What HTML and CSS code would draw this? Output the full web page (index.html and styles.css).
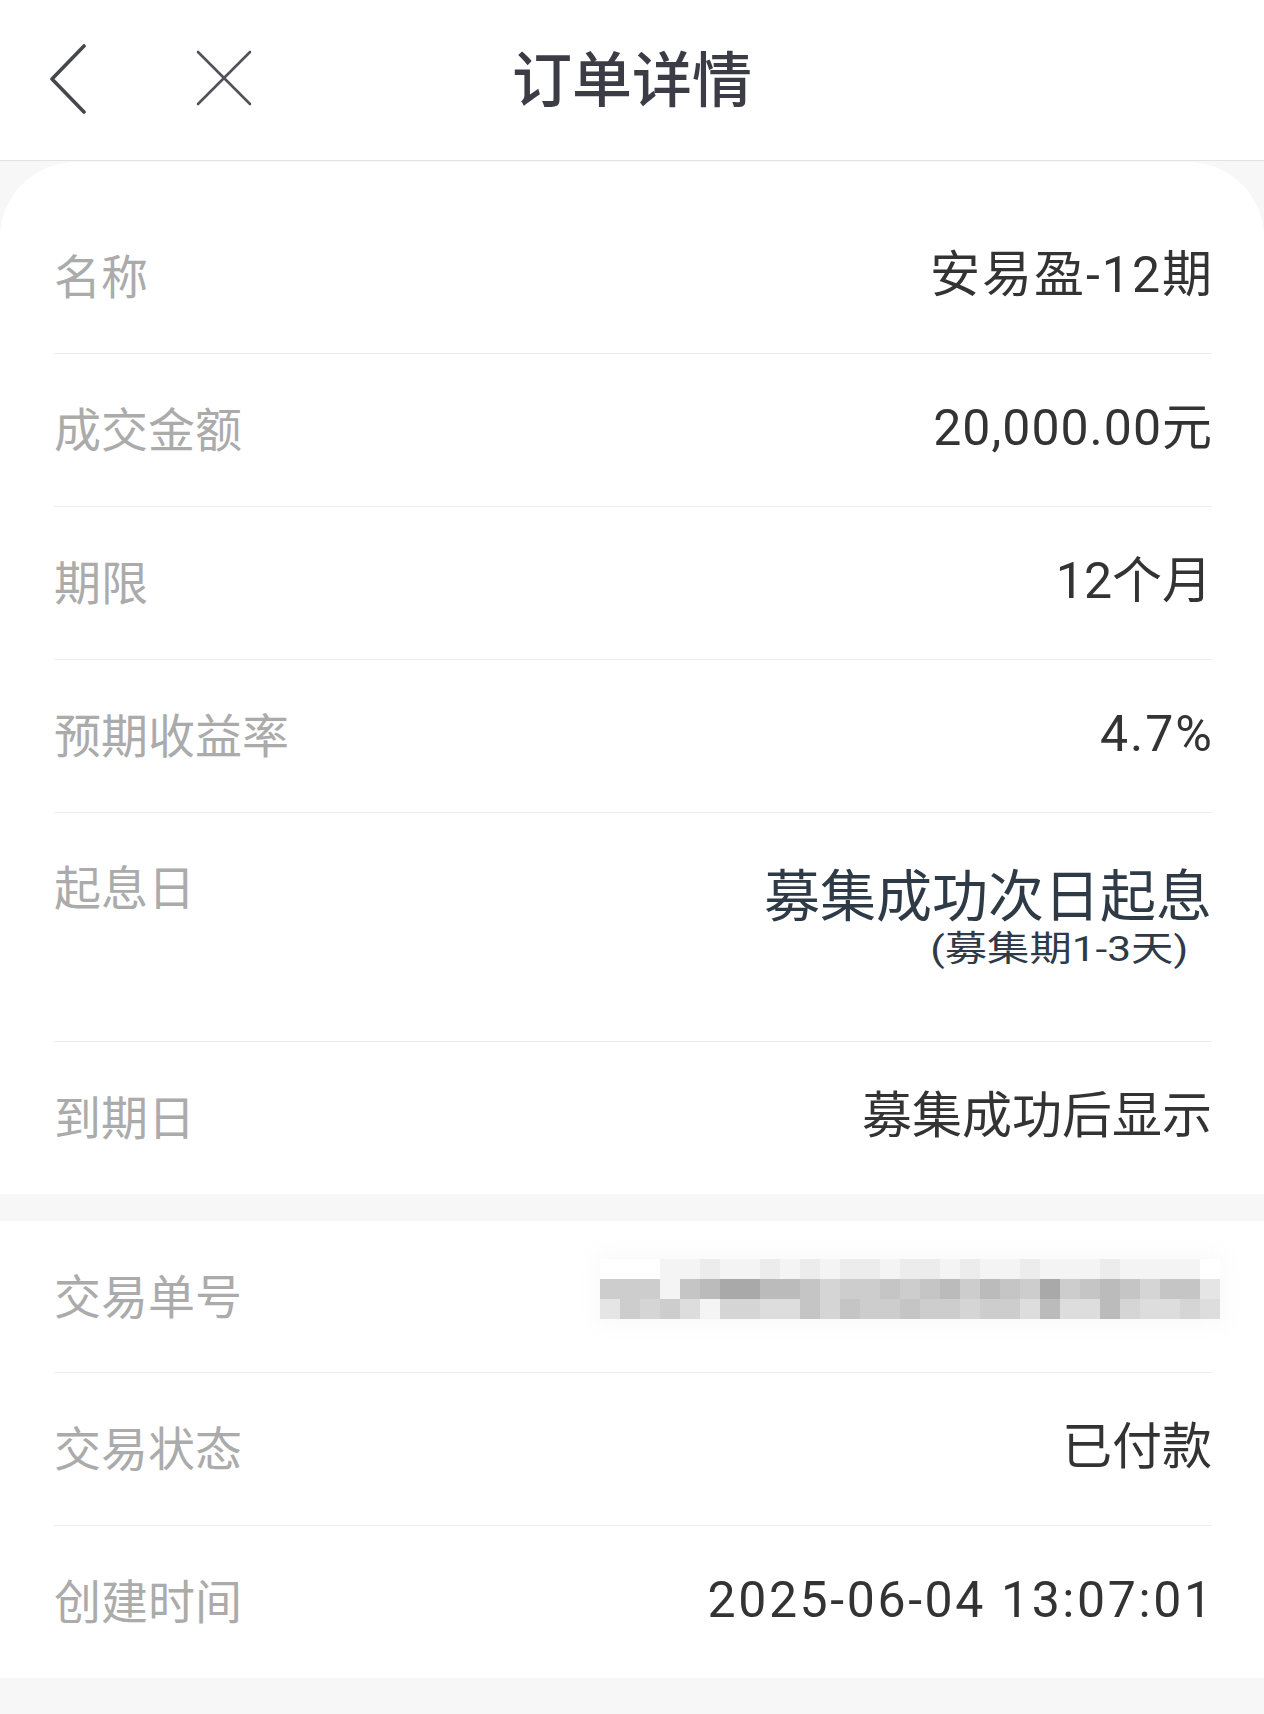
FILE: index.html
```html
<!DOCTYPE html>
<html lang="zh-CN">
<head>
<meta charset="utf-8">
<title>订单详情</title>
<link rel="stylesheet" href="styles.css">
</head>
<body>
<div class="page">
  <header class="topbar">
    <div class="nav-left">
      <svg class="icon-back" width="40" height="72" viewBox="0 0 40 72"><path d="M36 4 L4 37 L36 70" fill="none" stroke="#46464e" stroke-width="3.6" stroke-linecap="round" stroke-linejoin="round"/></svg>
      <svg class="icon-close" width="60" height="60" viewBox="0 0 60 60"><path d="M4 4 L56 56 M56 4 L4 56" fill="none" stroke="#52525a" stroke-width="2.6" stroke-linecap="round"/></svg>
    </div>
    <h1 class="title">订单详情</h1>
    <div class="nav-right"></div>
  </header>

  <section class="card card-main">
    <div class="row"><span class="label">名称</span><span class="value sp2">安易盈-12期</span></div>
    <div class="row"><span class="label">成交金额</span><span class="value sp1">20,000.00元</span></div>
    <div class="row"><span class="label">期限</span><span class="value">12个月</span></div>
    <div class="row"><span class="label">预期收益率</span><span class="value sp2">4.7%</span></div>
    <div class="row row-tall">
      <span class="label">起息日</span>
      <div class="value-block">
        <span class="value-main">募集成功次日起息</span>
        <span class="value-sub">(募集期1-3天)</span>
      </div>
    </div>
    <div class="row"><span class="label">到期日</span><span class="value">募集成功后显示</span></div>
  </section>

  <section class="card card-second">
    <div class="row">
      <span class="label">交易单号</span>
      <div class="mosaic">
        <i class="g0"></i><i class="g0"></i><i class="g0"></i><i class="g9"></i><i class="g9"></i><i class="g8"></i><i class="g9"></i><i class="g9"></i><i class="g8"></i><i class="g9"></i><i class="g8"></i><i class="g9"></i><i class="g8"></i><i class="g8"></i><i class="g9"></i><i class="g8"></i><i class="g8"></i><i class="g9"></i><i class="g8"></i><i class="g9"></i><i class="g9"></i><i class="g8"></i><i class="g9"></i><i class="g9"></i><i class="g9"></i><i class="g8"></i><i class="g9"></i><i class="g9"></i><i class="g9"></i><i class="g9"></i><i class="g0"></i>
        <i class="g4"></i><i class="g4"></i><i class="g4"></i><i class="g9"></i><i class="g3"></i><i class="g2"></i><i class="g1"></i><i class="g1"></i><i class="g2"></i><i class="g2"></i><i class="g3"></i><i class="g5"></i><i class="g4"></i><i class="g4"></i><i class="g3"></i><i class="g4"></i><i class="g3"></i><i class="g2"></i><i class="g4"></i><i class="g2"></i><i class="g3"></i><i class="g4"></i><i class="g1"></i><i class="g4"></i><i class="g3"></i><i class="g2"></i><i class="g3"></i><i class="g5"></i><i class="g3"></i><i class="g3"></i><i class="g7"></i>
        <i class="g7"></i><i class="g4"></i><i class="g5"></i><i class="g4"></i><i class="g6"></i><i class="g9"></i><i class="g5"></i><i class="g5"></i><i class="g6"></i><i class="g6"></i><i class="g3"></i><i class="g5"></i><i class="g3"></i><i class="g4"></i><i class="g4"></i><i class="g3"></i><i class="g4"></i><i class="g4"></i><i class="g5"></i><i class="g4"></i><i class="g4"></i><i class="g6"></i><i class="g2"></i><i class="g6"></i><i class="g6"></i><i class="g2"></i><i class="g5"></i><i class="g6"></i><i class="g6"></i><i class="g5"></i><i class="g6"></i>
      </div>
    </div>
    <div class="row"><span class="label">交易状态</span><span class="value">已付款</span></div>
    <div class="row"><span class="label">创建时间</span><span class="value sp-date">2025-06-04 13:07:01</span></div>
  </section>
</div>
</body>
</html>
```

FILE: styles.css
```css
* { box-sizing: border-box; }

html, body {
  margin: 0;
  padding: 0;
}

body {
  background: #f7f7f7;
  font-family: Roboto, "Noto Sans CJK SC", sans-serif;
  color: #333333;
}

.page {
  width: 1264px;
  min-height: 1714px;
  background: #f7f7f7;
}

.topbar {
  height: 161px;
  background: #ffffff;
  border-bottom: 1px solid #e3e3e3;
  display: grid;
  grid-template-columns: 1fr auto 1fr;
  align-items: center;
}

.nav-left {
  display: flex;
  align-items: center;
  padding-left: 48px;
  padding-bottom: 4px;
}

.icon-back { display: block; }

.icon-close {
  display: block;
  margin-left: 106px;
}

.title {
  margin: 0;
  font-size: 60px;
  font-weight: 500;
  color: #3c3c46;
  line-height: 1;
  font-family: "Noto Sans CJK SC", sans-serif;
  padding-bottom: 8px;
}

.card {
  background: #ffffff;
  padding: 0 52px 0 54px;
}

.card-main {
  margin-top: 1px;
  border-radius: 76px 76px 0 0;
  padding-top: 39px;
}

.card-second {
  margin-top: 27px;
}

.row {
  display: flex;
  justify-content: space-between;
  align-items: flex-start;
  padding: 44px 0 48px;
  border-bottom: 1px solid #ededed;
}

.row:last-child {
  border-bottom: none;
  height: 152px;
}

.label {
  font-family: "Noto Sans CJK SC", sans-serif;
  font-size: 47px;
  line-height: 60px;
  color: #ababab;
  white-space: nowrap;
  margin-top: -1px;
}

.value {
  font-size: 50px;
  line-height: 60px;
  color: #333333;
  white-space: nowrap;
}

.sp1 { letter-spacing: 1px; margin-right: -1px; }
.sp2 { letter-spacing: 2px; margin-right: -2px; }
.sp-date { letter-spacing: 2.6px; margin-right: -2.6px; }

.row-tall {
  padding-top: 46px;
  padding-bottom: 76px;
}

.row-tall .label {
  margin-top: -4px;
}

.value-block {
  display: flex;
  flex-direction: column;
  align-items: flex-end;
}

.value-main {
  font-size: 56px;
  line-height: 76px;
  color: #2f3a47;
  white-space: nowrap;
}

.value-sub {
  font-size: 35px;
  line-height: 30px;
  color: #2f3a47;
  white-space: nowrap;
  margin-right: 24px;
  transform: scaleX(1.21);
  transform-origin: right center;
}

.mosaic {
  display: grid;
  grid-template-columns: repeat(31, 20px);
  grid-auto-rows: 20px;
  margin-top: -6px;
  margin-right: -8px;
  box-shadow: 0 0 18px 6px rgba(250, 250, 250, 0.9);
}

.mosaic i { display: block; }
.g0 { background: transparent; }
.g1 { background: #a9a9a9; }
.g2 { background: #bbbbbb; }
.g3 { background: #c5c5c5; }
.g4 { background: #cdcdcd; }
.g5 { background: #d5d5d5; }
.g6 { background: #dddddd; }
.g7 { background: #e5e5e5; }
.g8 { background: #ececec; }
.g9 { background: #f4f4f4; }
```
